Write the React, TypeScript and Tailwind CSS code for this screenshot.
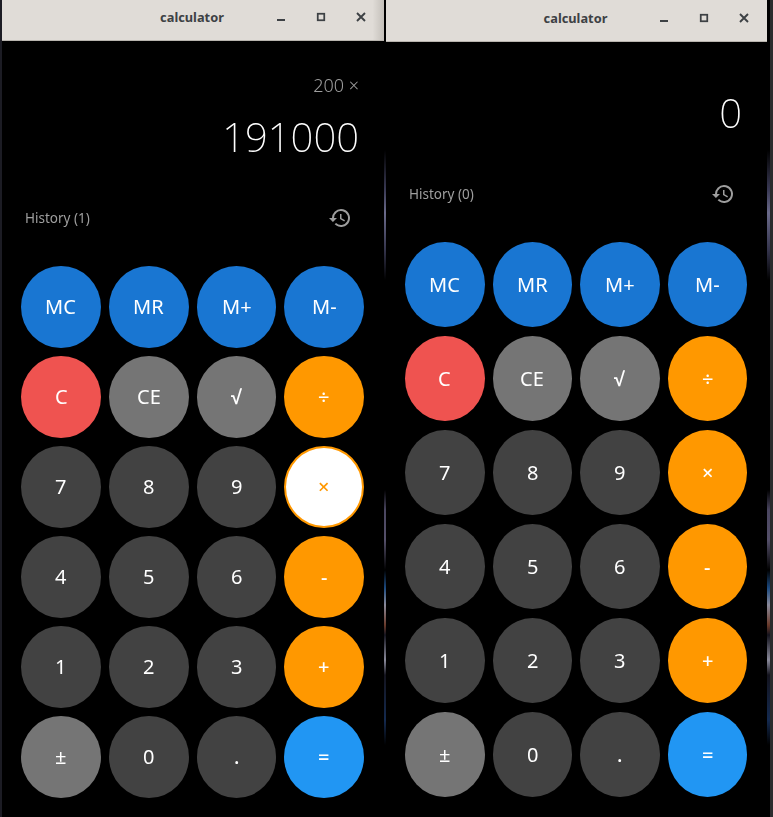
import React from 'react';

type Kind = 'mem' | 'clear' | 'func' | 'num' | 'op' | 'active' | 'eq';

const KIND_CLASS: Record<Kind, string> = {
  mem: 'bg-[#1976d2] text-white',
  clear: 'bg-[#ef5350] text-white',
  func: 'bg-[#757575] text-white',
  num: 'bg-[#424242] text-white',
  op: 'bg-[#ff9800] text-white',
  active: 'bg-white text-[#ff9800] border-2 border-[#ff9800]',
  eq: 'bg-[#2196f3] text-white',
};

const KEYS: [string, Kind][] = [
  ['MC', 'mem'], ['MR', 'mem'], ['M+', 'mem'], ['M-', 'mem'],
  ['C', 'clear'], ['CE', 'func'], ['√', 'func'], ['÷', 'op'],
  ['7', 'num'], ['8', 'num'], ['9', 'num'], ['×', 'op'],
  ['4', 'num'], ['5', 'num'], ['6', 'num'], ['-', 'op'],
  ['1', 'num'], ['2', 'num'], ['3', 'num'], ['+', 'op'],
  ['±', 'func'], ['0', 'num'], ['.', 'num'], ['=', 'eq'],
];

// wallpaper showing through the gaps between the windows
const STREAKS =
  'bg-[linear-gradient(to_bottom,#000_150px,#3a3a55_190px,#6a6a8a_213px,#34344c_250px,#000_280px,#000_490px,#4a4660_510px,#55506a_540px,#000_570px,#1c4a80_588px,#8a8a9a_605px,#6a3a2a_625px,#14141e_635px,#8a8a9a_660px,#14141e_675px,#142a50_720px,#000_745px)]';

const HistoryIcon = () => (
  <svg width="24" height="24" viewBox="0 0 24 24" fill="#9e9e9e">
    <path d="M13 3a9 9 0 0 0-9 9H1l3.89 3.89.07.14L9 12H6a7 7 0 1 1 2.05 4.95l-1.42 1.42A9 9 0 1 0 13 3zm-1 5v5l4.28 2.54.72-1.21-3.5-2.08V8H12z" />
  </svg>
);

const TitleBar = ({ wide }: { wide?: boolean }) => (
  <div className={wide
    ? 'relative h-[42px] shrink-0 flex items-center justify-end bg-[#e0dcd7] border-b border-[#b8b4ae] pr-[3px] pb-[5px]'
    : 'relative h-[41px] shrink-0 flex items-center justify-end bg-[linear-gradient(to_right,#e0dcd7_97%,#c4c0ba)] border-b border-[#b8b4ae] pr-[3px] pb-[6px]'}>
    <span className={wide
      ? 'absolute inset-x-0 top-[10px] pr-[2px] text-center text-[12.8px] leading-[16px] font-bold text-[#3d4144]'
      : 'absolute inset-x-0 top-[9px] pr-[2px] text-center text-[12.8px] leading-[16px] font-bold text-[#3d4144]'}>calculator</span>
    <div className="relative flex items-center">
      <div className="w-[40px] h-[34px] flex items-center justify-center">
        <svg width="10" height="10" viewBox="0 0 10 10"><rect x="1" y="7" width="8" height="2" fill="#3d4144" /></svg>
      </div>
      <div className="w-[40px] h-[34px] flex items-center justify-center">
        <svg width="10" height="10" viewBox="0 0 10 10"><rect x="1.75" y="1.75" width="6.5" height="6.5" fill="none" stroke="#3d4144" strokeWidth="1.75" /></svg>
      </div>
      <div className="w-[40px] h-[34px] flex items-center justify-center">
        <svg width="10" height="10" viewBox="0 0 10 10"><path d="M1 1l8 8M9 1l-8 8" stroke="#3d4144" strokeWidth="1.9" /></svg>
      </div>
    </div>
  </div>
);

const Calculator = ({
  expression,
  value,
  history,
  wide,
  activeOp,
}: {
  expression?: string;
  value: string;
  history: number;
  wide?: boolean;
  activeOp?: string;
}) => (
  <div className={wide ? 'w-[381px] flex flex-col bg-black' : 'w-[382px] flex flex-col bg-black'}>
    <TitleBar wide={wide} />
    <div className={expression ? 'pt-[32px] pl-[23px] pr-[25px] text-right' : 'pt-[47px] pl-[23px] pr-[25px] text-right'}>
      {expression && <div className="h-[24px] leading-[24px] mb-[16px] text-[18px] font-light text-[#9e9e9e] will-change-transform">{expression}</div>}
      <div className="h-[48px] leading-[48px] text-[40px] font-extralight text-white will-change-transform">{value}</div>
    </div>
    <div className="mt-[37px] h-[40px] flex items-center justify-between pl-[23px] pr-[32px]">
      <span className="text-[13.5px] leading-[16px] -mt-[1px] text-[#9e9e9e] will-change-transform">History ({history})</span>
      <HistoryIcon />
    </div>
    <div className={wide
      ? 'mt-[28px] pl-[19px] pr-[20px] grid grid-cols-4 gap-x-[8px] gap-y-[9px] auto-rows-[85px]'
      : 'mt-[28px] pl-[19px] pr-[20px] grid grid-cols-4 gap-x-[8px] gap-y-[8px] auto-rows-[82px]'}>
      {KEYS.map(([label, kind]) => (
        <button
          key={label}
          className={`flex items-center justify-center rounded-[50%] text-[20px] ${label === activeOp ? KIND_CLASS.active : KIND_CLASS[kind]} ${kind === 'op' || kind === 'eq' || label === '.' ? 'text-[16px] font-medium' : ''} ${label === '√' ? 'font-bold' : ''}`}
        >
          <span className="will-change-transform">{label}</span>
        </button>
      ))}
    </div>
  </div>
);

export default function App() {
  return (
    <div className="w-[773px] h-[817px] overflow-hidden flex bg-black font-['Noto_Sans',sans-serif]">
      <div className="w-[2px] shrink-0 bg-[#1c1c24]" />
      <Calculator expression="200 ×" value="191000" history={1} activeOp="×" />
      <div className={`w-[2px] shrink-0 ${STREAKS}`} />
      <Calculator value="0" history={0} wide />
      <div className={`w-[3px] shrink-0 ${STREAKS}`} />
      <div className="w-[3px] shrink-0 bg-[#2c2c2e]" />
    </div>
  );
}
